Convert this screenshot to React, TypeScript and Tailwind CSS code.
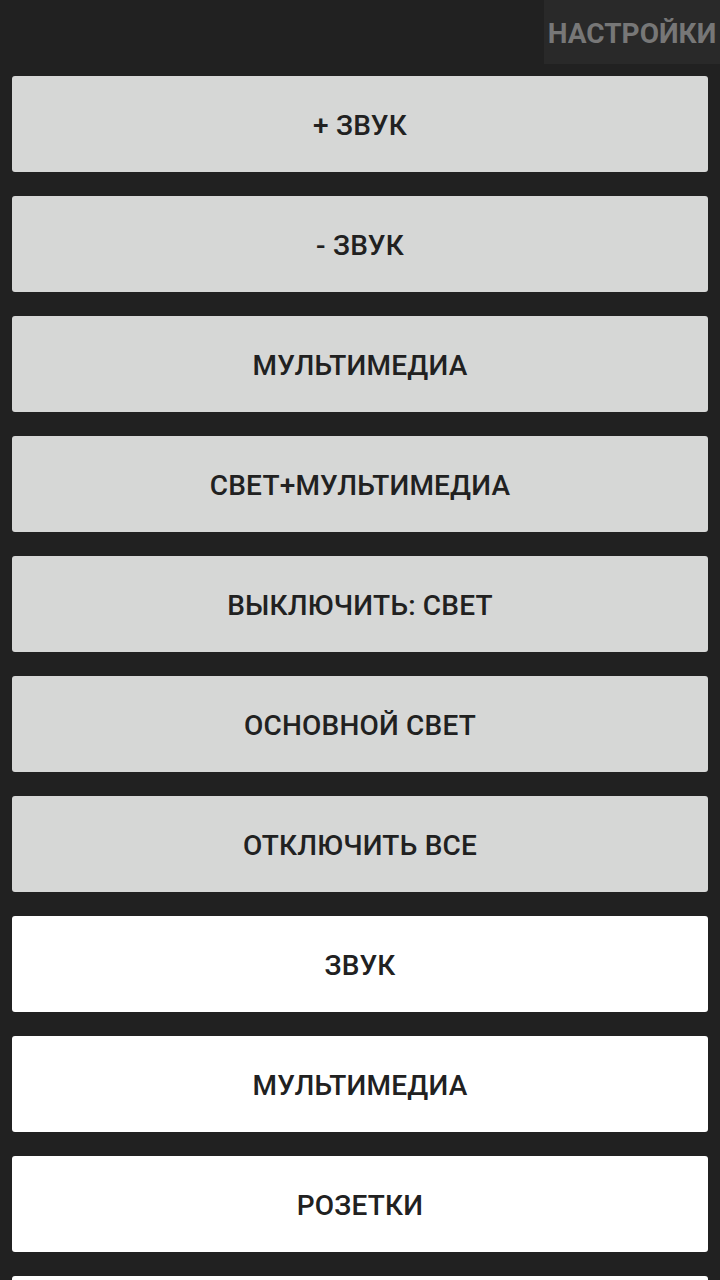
import React from "react";

const grayButtons = [
  "+ ЗВУК",
  "- ЗВУК",
  "МУЛЬТИМЕДИА",
  "СВЕТ+МУЛЬТИМЕДИА",
  "ВЫКЛЮЧИТЬ: СВЕТ",
  "ОСНОВНОЙ СВЕТ",
  "ОТКЛЮЧИТЬ ВСЕ",
];

const whiteButtons = ["ЗВУК", "МУЛЬТИМЕДИА", "РОЗЕТКИ", "СВЕТ"];

const App = () => {
  return (
    <div
      className="w-[720px] h-[1280px] overflow-hidden bg-[#212121]"
      style={{ fontFamily: "Roboto, 'Liberation Sans', sans-serif" }}
    >
      <div className="flex justify-end h-16">
        <div className="flex items-center justify-center w-[176px] h-16 pt-1 bg-[#292929] text-[#777777] text-[28px] font-bold">
          НАСТРОЙКИ
        </div>
      </div>
      <div className="flex flex-col gap-6 px-3 pt-3">
        {grayButtons.map((label) => (
          <button
            key={label}
            className="flex shrink-0 items-center justify-center h-24 w-full pt-1 rounded-[3px] bg-[#d6d7d6] text-[#212121] text-[28px] font-medium tracking-[0.2px]"
          >
            {label}
          </button>
        ))}
        {whiteButtons.map((label) => (
          <button
            key={label}
            className="flex shrink-0 items-center justify-center h-24 w-full pt-1 rounded-[3px] bg-white text-[#212121] text-[28px] font-medium tracking-[0.2px]"
          >
            {label}
          </button>
        ))}
      </div>
    </div>
  );
};

export default App;
